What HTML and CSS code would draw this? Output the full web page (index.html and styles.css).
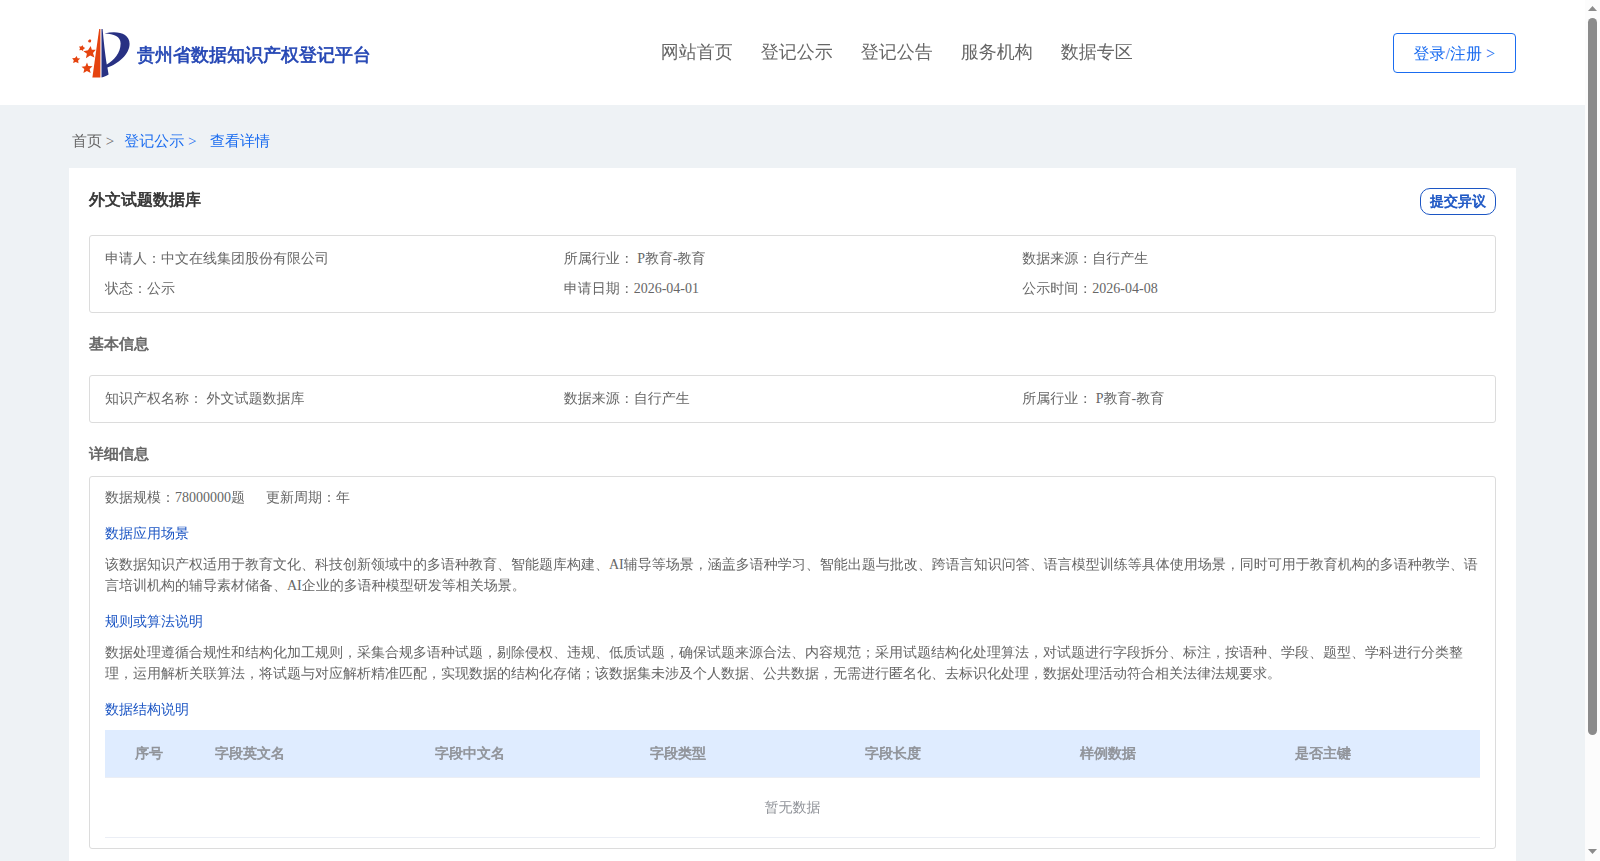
FILE: index.html
```html
<!DOCTYPE html>
<html lang="zh-CN">
<head>
  <meta charset="UTF-8">
  <title>贵州省数据知识产权登记平台</title>
  <link rel="stylesheet" href="styles.css">
</head>
<body>

<div class="page">
  <div class="header">
    <div class="logo">
      <svg class="logo-icon" width="60" height="52" viewBox="0 0 60 52">
        <path fill="#e5430f" d="M27.2 1 L28.4 1 L28.4 49.4 L20.4 49.4 Z"/>
        <path fill="#283183" d="M29.5 1 L30.6 1 C31.6 12 33 26 34.8 36.5 C42 32.5 48.6 25 48.6 15.5 C48.6 8.5 42 5.9 32.6 5.6 C45 2.3 57.6 5.3 57.6 15.8 C57.6 26.5 46 36 35.4 39.6 L36.6 46.6 C34.5 48.1 32 49 29.5 49.4 Z"/>
        <g fill="#e5430f">
          <path d="M18.7 18 L19.8 21.8 L23.8 21.8 L21 25 L22.4 29.6 L18.1 27.6 L13.9 30.2 L14.9 25.7 L11.4 23.2 L16 22.3 Z"/>
          <path d="M15 34.5 L16.3 38 L20.5 38.2 L17.6 41 L18.7 44.9 L14.9 43.1 L11.4 45.1 L12.3 41.1 L9.5 38.7 L13.4 38.2 Z"/>
          <path d="M4.7 27.9 L5.5 30.2 L8.2 30.5 L6.1 32.5 L6.5 35.3 L3.8 33.9 L1.1 35.1 L1.8 32.2 L.1 30.2 L3 29.9 Z"/>
          <path d="M10.8 17.3 L11.3 19.1 L13.2 20 L11.4 21.3 L11 23.1 L9.4 22 L7.3 22.3 L8 20.2 L7 18.4 L9.1 18.6 Z"/>
          <path d="M17.8 11.2 L19.2 12.1 L18.9 14.2 L17 14.5 L15.8 13 Z"/>
        </g>
      </svg>
      <span class="logo-text">贵州省数据知识产权登记平台</span>
    </div>
    <div class="nav">
      <a>网站首页</a>
      <a>登记公示</a>
      <a>登记公告</a>
      <a>服务机构</a>
      <a>数据专区</a>
    </div>
    <div class="login">登录/注册 &gt;</div>
  </div>

  <div class="container">
    <div class="breadcrumb">
      <span>首页 &gt;</span>
      <span class="link">登记公示 &gt;</span>
      <span class="link last">查看详情</span>
    </div>

    <div class="card">
      <div class="card-head">
        <h1>外文试题数据库</h1>
        <div class="objection">提交异议</div>
      </div>

      <div class="box info">
        <div>申请人：中文在线集团股份有限公司</div>
        <div>所属行业： P教育-教育</div>
        <div>数据来源：自行产生</div>
        <div>状态：公示</div>
        <div>申请日期：2026-04-01</div>
        <div>公示时间：2026-04-08</div>
      </div>

      <h2 class="basic-title">基本信息</h2>
      <div class="box info">
        <div>知识产权名称： 外文试题数据库</div>
        <div>数据来源：自行产生</div>
        <div>所属行业： P教育-教育</div>
      </div>

      <h2 class="detail-title">详细信息</h2>
      <div class="box detail">
        <div class="scale">
          <span>数据规模：78000000题</span>
          <span>更新周期：年</span>
        </div>
        <h3>数据应用场景</h3>
        <p>该数据知识产权适用于教育文化、科技创新领域中的多语种教育、智能题库构建、AI辅导等场景，涵盖多语种学习、智能出题与批改、跨语言知识问答、语言模型训练等具体使用场景，同时可用于教育机构的多语种教学、语言培训机构的辅导素材储备、AI企业的多语种模型研发等相关场景。</p>
        <h3>规则或算法说明</h3>
        <p>数据处理遵循合规性和结构化加工规则，采集合规多语种试题，剔除侵权、违规、低质试题，确保试题来源合法、内容规范；采用试题结构化处理算法，对试题进行字段拆分、标注，按语种、学段、题型、学科进行分类整理，运用解析关联算法，将试题与对应解析精准匹配，实现数据的结构化存储；该数据集未涉及个人数据、公共数据，无需进行匿名化、去标识化处理，数据处理活动符合相关法律法规要求。</p>
        <h3>数据结构说明</h3>
        <table>
          <thead>
            <tr>
              <th class="col-index">序号</th>
              <th class="col-en">字段英文名</th>
              <th>字段中文名</th>
              <th>字段类型</th>
              <th>字段长度</th>
              <th>样例数据</th>
              <th class="col-key">是否主键</th>
            </tr>
          </thead>
          <tbody>
            <tr><td colspan="7">暂无数据</td></tr>
          </tbody>
        </table>
      </div>
    </div>
  </div>
</div>

<div class="scrollbar">
  <svg width="9" height="5" viewBox="0 0 9 5"><path fill="#8b8b8b" d="M0 5 L4.5 0 L9 5 Z"/></svg>
  <div class="thumb"></div>
  <svg class="down" width="9" height="5" viewBox="0 0 9 5"><path fill="#8b8b8b" d="M0 0 L4.5 5 L9 0 Z"/></svg>
</div>

</body>
</html>
```

FILE: styles.css
```css
* { box-sizing: border-box; }
body {
  margin: 0;
  height: 861px;
  display: flex;
  overflow: hidden;
  background: #eef2f5;
  color: #666;
  font-family: "Liberation Serif", "WenQuanYi Zen Hei", "Droid Sans Fallback", "Noto Sans CJK SC", serif;
  font-size: 14px;
}
h1, h2, h3, p { margin: 0; }
.page { flex: 1; min-width: 0; }

/* header */
.header {
  height: 105px;
  padding: 0 69px;
  background: #fff;
  display: flex;
  justify-content: space-between;
}
.logo {
  width: 591.8px;
  display: flex;
  padding: 28px 0 0 3px;
}
.logo-text {
  margin: 12px 0 0 5px;
  line-height: 30px;
  font-size: 18px;
  color: #2446b4;
}
.nav {
  flex: 1;
  display: flex;
  gap: 28px;
  padding-top: 37px;
  font-size: 18px;
  line-height: 30px;
}
.login {
  width: 123px;
  height: 40px;
  margin-top: 33px;
  border: 1px solid #1a6cf0;
  border-radius: 4px;
  color: #1a6cf0;
  font-size: 16px;
  line-height: 40px;
  padding-left: 19.5px;
  white-space: nowrap;
}

/* content */
.container { padding: 0 69px; }
.breadcrumb {
  height: 63px;
  padding: 6px 0 0 3px;
  display: flex;
  gap: 10px;
  font-size: 15px;
  line-height: 60px;
}
.link { color: #1a6cf0; }
.last { margin-left: 3.5px; }
.card {
  height: 693px;
  padding: 20px 20px 12px;
  background: #fff;
}
.card-head {
  height: 47px;
  display: flex;
  justify-content: space-between;
  align-items: flex-start;
}
h1 {
  font-size: 16px;
  line-height: 24px;
  color: #333;
}
.objection {
  width: 76px;
  height: 27px;
  border: 1px solid #1c56c4;
  border-radius: 10px;
  color: #1c56c4;
  line-height: 26px;
  text-align: center;
}
/* no bold face for the Chinese glyphs, so thicken them */
.logo-text, .objection, h1, h2, th {
  font-weight: normal;
  -webkit-text-stroke: 0.65px currentColor;
}
.box {
  border: 1px solid #dcdcdc;
  border-radius: 3px;
  padding: 8px 15px;
}
.info {
  display: grid;
  grid-template-columns: repeat(3, 1fr);
  line-height: 30px;
  padding-right: 14px;
}
h2 {
  font-size: 15px;
  line-height: 20px;
}
.basic-title { margin: 21px 0; }
.detail-title { margin: 21px 0 12px; }
.detail { height: 373px; }
.scale {
  display: flex;
  gap: 21px;
  line-height: 26px;
}
h3 {
  margin: 12px 0 10px;
  font-size: 14px;
  font-weight: normal;
  line-height: 21px;
  color: #1c56c4;
}
p { line-height: 21px; margin-bottom: 15px; }

table {
  width: 100%;
  table-layout: fixed;
  border-collapse: separate;
  border-spacing: 0;
  color: #909399;
}
th {
  height: 48px;
  padding: 0 0 0 10px;
  background: #dfecff;
  border-bottom: 1px solid #ebeef5;
  text-align: left;
  width: 215px;
}
td {
  height: 60px;
  padding: 0;
  border-bottom: 1px solid #ebeef5;
  text-align: center;
}
.col-index { width: 100px; padding-left: 30px; }
.col-en { width: 220px; }
.col-key { width: auto; }

/* scrollbar */
.scrollbar {
  width: 15px;
  background: #fcfcfc;
  display: flex;
  flex-direction: column;
  align-items: center;
  padding: 6px 0 7px;
}
.thumb {
  width: 9px;
  height: 717px;
  margin-top: 7px;
  border-radius: 5px;
  background: #8b8b8b;
}
.down { margin-top: auto; }
```
